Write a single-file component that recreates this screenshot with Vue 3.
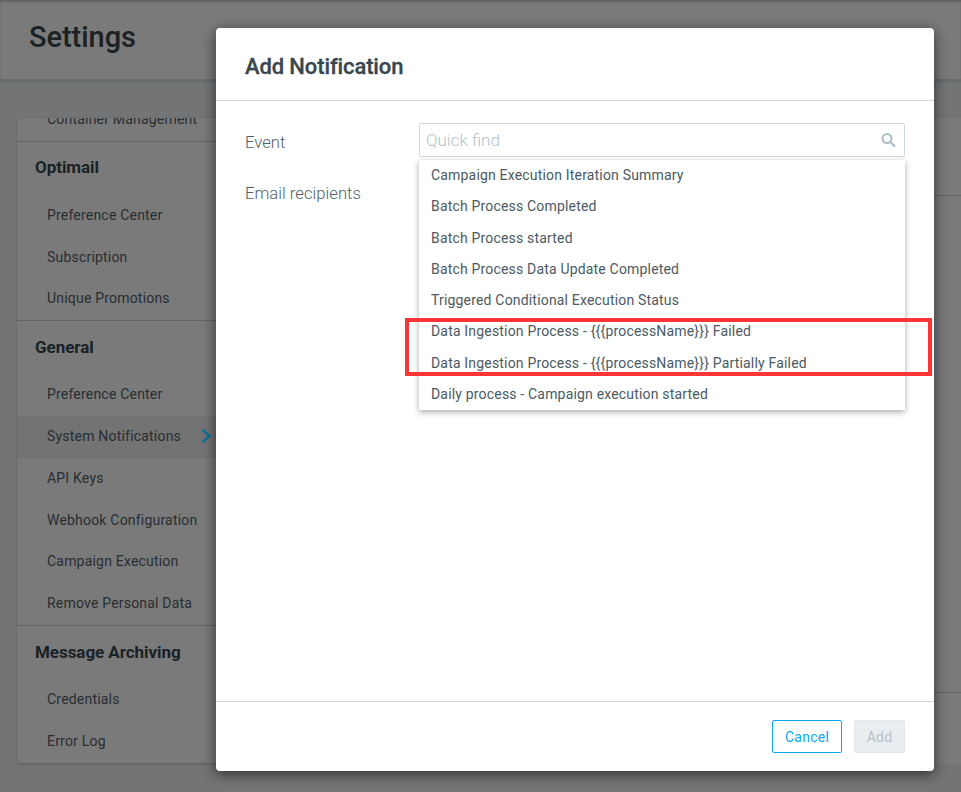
<script setup>
const sections = [
  {
    title: 'Optimail',
    items: ['Preference Center', 'Subscription', 'Unique Promotions']
  },
  {
    title: 'General',
    items: ['Preference Center', 'System Notifications', 'API Keys', 'Webhook Configuration', 'Campaign Execution', 'Remove Personal Data']
  },
  {
    title: 'Message Archiving',
    items: ['Credentials', 'Error Log']
  }
]

const events = [
  'Campaign Execution Iteration Summary',
  'Batch Process Completed',
  'Batch Process started',
  'Batch Process Data Update Completed',
  'Triggered Conditional Execution Status',
  'Data Ingestion Process - {{{processName}}} Failed',
  'Data Ingestion Process - {{{processName}}} Partially Failed',
  'Daily process - Campaign execution started'
]
</script>

<template>
  <div class="page">
    <header class="page-header">
      <h1>Settings</h1>
    </header>

    <div class="page-body">
      <aside class="side-card">
        <div class="clipped-item"><span>Container Management</span></div>
        <section v-for="section in sections" :key="section.title" class="side-section">
          <h3>{{ section.title }}</h3>
          <div
            v-for="item in section.items"
            :key="item"
            class="side-item"
            :class="{ active: item === 'System Notifications' }"
          >
            {{ item }}
            <svg v-if="item === 'System Notifications'" class="chevron" width="12" height="16" viewBox="0 0 12 16">
              <path d="M2.5 1.5l7 6.5-7 6.5" fill="none" stroke="#0c6f9f" stroke-width="2.4" />
            </svg>
          </div>
        </section>
      </aside>
      <div class="content-card">
        <div class="content-row"></div>
        <div class="content-fill"></div>
      </div>
    </div>

    <div class="overlay"></div>

    <div class="modal">
      <div class="modal-header">Add Notification</div>
      <div class="modal-body">
        <div class="labels">
          <label>Event</label>
          <label>Email recipients</label>
        </div>
        <div class="field">
          <div class="search">
            <input placeholder="Quick find" />
            <svg width="16" height="16" viewBox="0 0 16 16">
              <circle cx="6" cy="6.5" r="4.5" fill="none" stroke="#a9bcc6" stroke-width="2" />
              <path d="M9.5 10l4.5 4.5" stroke="#a9bcc6" stroke-width="2.2" />
            </svg>
          </div>
          <ul class="dropdown">
            <li v-for="event in events" :key="event">{{ event }}</li>
          </ul>
        </div>
      </div>
      <div class="modal-footer">
        <button class="btn-cancel">Cancel</button>
        <button class="btn-add" disabled>Add</button>
      </div>
    </div>

    <div class="highlight"></div>
  </div>
</template>

<style scoped>
.page {
  position: relative;
  width: 961px;
  height: 792px;
  overflow: hidden;
  background: #eef2f5;
  font-family: Roboto, "Liberation Sans", sans-serif;
  color: #37474f;
}

.page-header {
  background: #fff;
  border-bottom: 3px solid #d8e2e6;
  box-sizing: border-box;
  height: 82px;
  padding: 0 29px;
  box-shadow: inset 0 2px 2px rgba(0, 0, 0, 0.2);
}

.page-header h1 {
  margin: 0;
  padding-top: 19px;
  font-size: 29px;
  line-height: 36px;
  font-weight: 500;
  letter-spacing: -0.05px;
  color: #37474f;
}

.page-body {
  display: flex;
  gap: 16px;
  padding: 36px 0 0 17px;
}

.side-card {
  width: 230px;
  height: 645px;
  flex-shrink: 0;
  background: #fff;
  border-radius: 4px;
  overflow: hidden;
  box-shadow: 0 1px 3px rgba(0, 0, 0, 0.2);
}

.clipped-item {
  height: 23px;
  margin-bottom: -0.6px;
  border-bottom: 1px solid #ccd6db;
  position: relative;
  overflow: hidden;
}

.clipped-item span {
  position: absolute;
  left: 30px;
  bottom: 14px;
  font-size: 14px;
  letter-spacing: 0.2px;
  color: #546269;
}

.side-section {
  border-bottom: 1px solid #ccd6db;
}

.side-section:last-child {
  border-bottom: 0;
}

.side-section h3 {
  margin: 0;
  padding: 16px 18px 0;
  height: 37.5px;
  font-size: 17px;
  line-height: 20px;
  font-weight: 700;
  letter-spacing: -0.05px;
  color: #37474f;
  box-sizing: content-box;
}

.side-item {
  position: relative;
  height: 41.7px;
  line-height: 41.7px;
  padding-left: 30px;
  font-size: 14px;
  letter-spacing: 0.2px;
  color: #546269;
}

.side-item.active {
  background: #f0f0f0;
}

.chevron {
  position: absolute;
  z-index: 2;
  left: 183px;
  top: 12px;
}

.content-card {
  flex: 1;
  height: 645px;
  display: flex;
  flex-direction: column;
  background: #fff;
  border-radius: 4px 0 0 4px;
}

.content-row {
  height: 77px;
  border-bottom: 1px solid #ccd6db;
}

.content-fill {
  height: 496px;
  border-bottom: 1px solid #ccd6db;
}

.overlay {
  position: absolute;
  inset: 0;
  background: rgba(0, 0, 0, 0.52);
}

.modal {
  position: absolute;
  z-index: 3;
  left: 216px;
  top: 28px;
  width: 718px;
  height: 743px;
  display: flex;
  flex-direction: column;
  background: #fff;
  border-radius: 4px;
  box-shadow: 0 3px 14px rgba(0, 0, 0, 0.6);
}

.modal-header {
  height: 73px;
  flex-shrink: 0;
  box-sizing: border-box;
  padding: 0 29px;
  line-height: 77px;
  border-bottom: 1px solid #cfd8dc;
  font-size: 22px;
  font-weight: 500;
  letter-spacing: -0.12px;
  color: #37474f;
  -webkit-text-stroke: 0.3px #37474f;
}

.modal-body {
  flex: 1;
  display: flex;
  padding: 22px 29px 0;
}

.labels {
  width: 174px;
  flex-shrink: 0;
  display: flex;
  flex-direction: column;
  padding-top: 10px;
  gap: 31px;
}

.labels label {
  font-size: 16.7px;
  line-height: 20px;
  font-weight: 300;
  color: #4f5f67;
}

.field {
  flex: 1;
  position: relative;
}

.search {
  height: 34px;
  box-sizing: border-box;
  display: flex;
  align-items: center;
  padding: 0 6px;
  border: 1px solid #cfd8dc;
  border-radius: 2px;
}

.search input {
  flex: 1;
  min-width: 0;
  border: 0;
  outline: 0;
  padding: 0;
  font-family: inherit;
  font-size: 17px;
  font-weight: 300;
}

.search input::placeholder {
  color: #b4c3ca;
  opacity: 1;
}

.search svg {
  margin-right: 1px;
}

.dropdown {
  position: absolute;
  left: 0;
  right: 0;
  top: 37px;
  margin: 0;
  padding: 0;
  list-style: none;
  background: #fff;
  box-shadow: 0 2px 6px rgba(0, 0, 0, 0.35);
}

.dropdown li {
  height: 31.3px;
  line-height: 31.6px;
  padding-left: 12px;
  font-size: 14px;
  letter-spacing: 0.18px;
  color: #4a5a63;
}

.modal-footer {
  height: 70px;
  flex-shrink: 0;
  box-sizing: border-box;
  border-top: 1px solid #cfd8dc;
  display: flex;
  justify-content: flex-end;
  align-items: center;
  gap: 12px;
  padding: 0 29px 0 0;
}

.modal-footer button {
  height: 33px;
  box-sizing: border-box;
  border-radius: 2px;
  font-family: inherit;
  font-size: 14px;
  font-weight: 400;
  letter-spacing: 0.25px;
  background: #fff;
}

.btn-cancel {
  width: 70px;
  border: 1px solid #0aa8f5;
  color: #0aa8f5;
}

.btn-add {
  width: 51px;
  border: 1px solid #e3e7ea;
  background: #e9edf0 !important;
  color: #b5c2ca;
}

.highlight {
  position: absolute;
  z-index: 4;
  left: 405px;
  top: 318px;
  width: 527px;
  height: 58px;
  box-sizing: border-box;
  border: 4px solid #fb3535;
}
</style>

<style>
body {
  margin: 0;
}
</style>
